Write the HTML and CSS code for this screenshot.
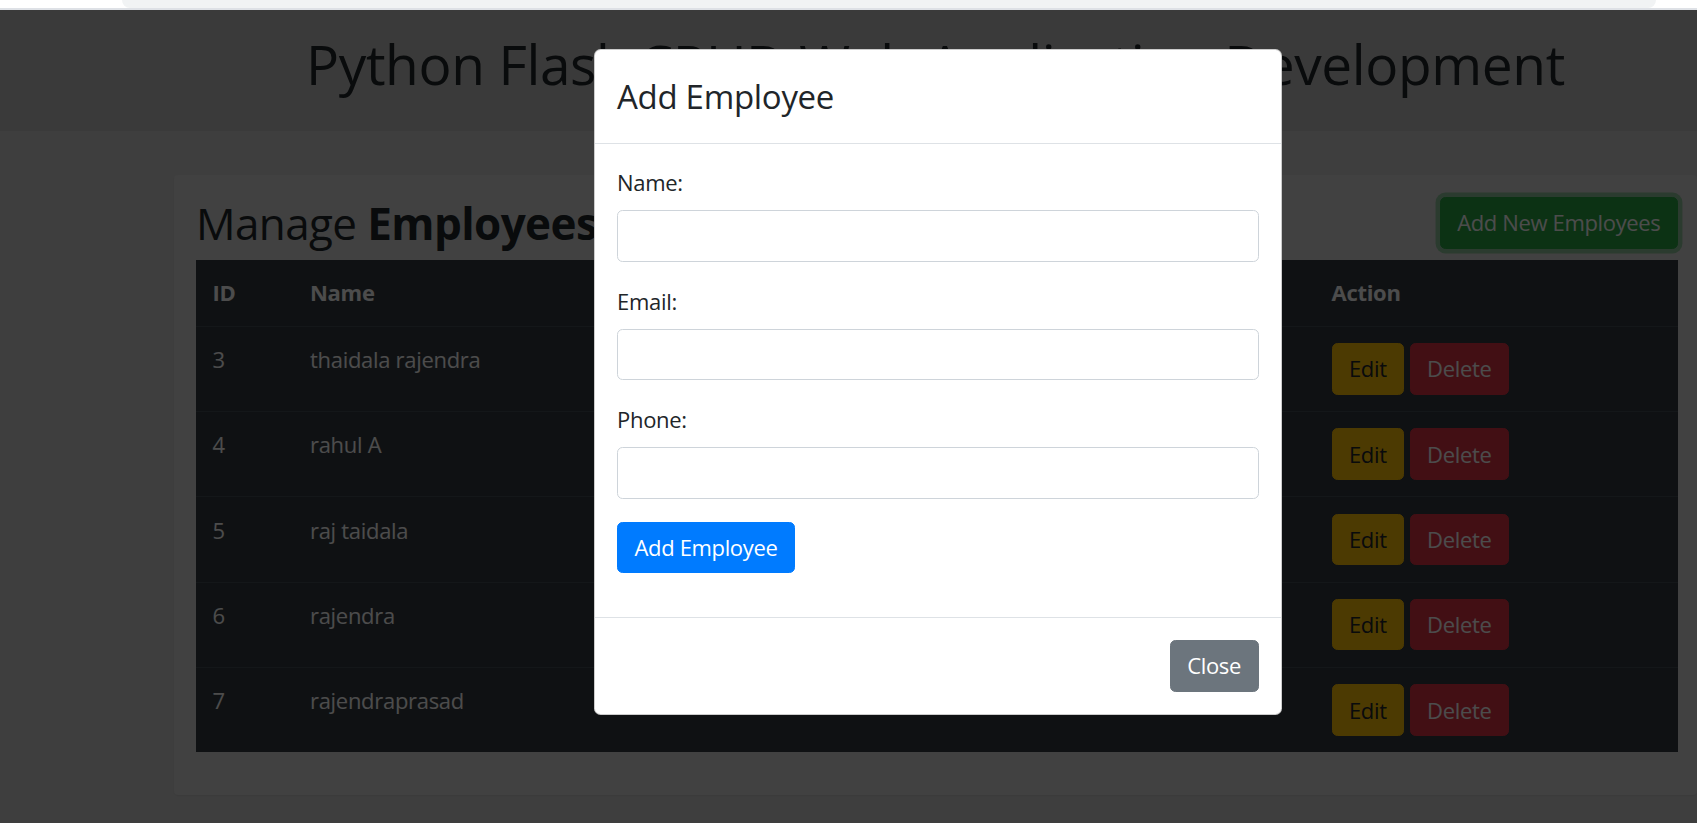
FILE: index.html
```html
<!DOCTYPE html>
<html lang="en">
<head>
<meta charset="utf-8">
<title>Python Flask CRUD Web Application Development</title>
<link rel="stylesheet" href="styles.css">
</head>
<body>
<div class="chrome"><div class="chrome-bar"></div></div>
<div class="viewport">
  <header class="hero">
    <h1 class="hero-title">Python Flask CRUD Web Application Development</h1>
  </header>
  <main class="wrap">
    <section class="card">
      <div class="card-head">
        <h2 class="card-title">Manage <b>Employees</b></h2>
        <button class="btn btn-success btn-focus" type="button">Add New Employees</button>
      </div>
      <table class="table">
        <colgroup>
          <col class="c-id"><col class="c-name"><col class="c-email"><col class="c-phone"><col class="c-action">
        </colgroup>
        <thead>
          <tr><th>ID</th><th>Name</th><th>Email</th><th>Phone</th><th>Action</th></tr>
        </thead>
        <tbody>
          <tr><td>3</td><td>thaidala rajendra</td><td>rajendra@gmail.com</td><td>9876543210</td><td><button class="btn btn-warning" type="button">Edit</button> <button class="btn btn-danger" type="button">Delete</button></td></tr>
          <tr><td>4</td><td>rahul A</td><td>rahul@gmail.com</td><td>9876501234</td><td><button class="btn btn-warning" type="button">Edit</button> <button class="btn btn-danger" type="button">Delete</button></td></tr>
          <tr><td>5</td><td>raj taidala</td><td>raj@gmail.com</td><td>9123456780</td><td><button class="btn btn-warning" type="button">Edit</button> <button class="btn btn-danger" type="button">Delete</button></td></tr>
          <tr><td>6</td><td>rajendra</td><td>rajendra6@gmail.com</td><td>9988776655</td><td><button class="btn btn-warning" type="button">Edit</button> <button class="btn btn-danger" type="button">Delete</button></td></tr>
          <tr><td>7</td><td>rajendraprasad</td><td>prasad@gmail.com</td><td>9012345678</td><td><button class="btn btn-warning" type="button">Edit</button> <button class="btn btn-danger" type="button">Delete</button></td></tr>
        </tbody>
      </table>
    </section>
  </main>

  <div class="backdrop"></div>

  <div class="modal" role="dialog" aria-modal="true">
    <div class="modal-content">
      <div class="modal-header">
        <h4 class="modal-title">Add Employee</h4>
      </div>
      <div class="modal-body">
        <form>
          <div class="form-group">
            <label class="label">Name:</label>
            <input class="input" type="text">
          </div>
          <div class="form-group">
            <label class="label">Email:</label>
            <input class="input" type="email">
          </div>
          <div class="form-group">
            <label class="label">Phone:</label>
            <input class="input" type="text">
          </div>
          <div class="form-group">
            <button class="btn btn-primary" type="button">Add Employee</button>
          </div>
        </form>
      </div>
      <div class="modal-footer">
        <button class="btn btn-secondary" type="button">Close</button>
      </div>
    </div>
  </div>
</div>
</body>
</html>
```

FILE: styles.css
```css
html, body {
  margin: 0;
  padding: 0;
  overflow: hidden;
}

body {
  width: 1697px;
  height: 823px;
  font-family: "Open Sans", "Noto Sans", "DejaVu Sans", sans-serif;
  font-size: 22px;
  line-height: 1.5;
  letter-spacing: -0.3px;
  color: #212529;
  background: #cfcfcf;
}

/* browser chrome strip */
.chrome {
  height: 8px;
  background: #ffffff;
  border-bottom: 2px solid #dee1e6;
}
.chrome-bar {
  margin-left: 122px;
  width: 1534px;
  height: 8px;
  background: #f1f3f4;
  border-radius: 0 0 8px 8px;
}

.viewport {
  position: relative;
  height: 813px;
  overflow: hidden;
  background: #cfcfcf;
}

/* page header */
.hero {
  background: #c2c2c2;
  padding: 21px 0 23px;
}
.hero-title {
  margin: 0 0 11px 306px;
  font-size: 55px;
  font-weight: 400;
  line-height: 1.2;
  letter-spacing: -0.38px;
  color: #212529;
  white-space: nowrap;
}

.wrap {
  padding-top: 44px;
}

.card {
  margin-left: 174px;
  padding: 22px 19px 43px 22px;
  background: #d9d9d9;
  border-radius: 4px;
  box-shadow: 0 1px 1px rgba(0, 0, 0, 0.05);
}

.card-head {
  display: flex;
  justify-content: space-between;
  align-items: flex-start;
  margin-bottom: 10px;
}
.card-title {
  margin: 0;
  font-size: 44px;
  font-weight: 400;
  line-height: 1.2;
  letter-spacing: -0.6px;
}
.card-title b {
  font-weight: 700;
}

/* buttons */
.btn {
  display: inline-block;
  font-family: inherit;
  font-size: 22px;
  line-height: 1.5;
  font-weight: 400;
  letter-spacing: -0.35px;
  padding: 8.25px 16.5px;
  border: 1px solid transparent;
  border-radius: 5.5px;
  cursor: pointer;
  vertical-align: middle;
}
.btn-success { background: #28a745; border-color: #28a745; color: #fff; }
.btn-focus { box-shadow: 0 0 0 4.4px rgba(72, 180, 97, 0.5); }
.btn-warning { background: #ffc107; border-color: #ffc107; color: #212529; }
.btn-danger { background: #dc3545; border-color: #dc3545; color: #fff; }
.btn-primary { background: #007bff; border-color: #007bff; color: #fff; }
.btn-secondary { background: #6c757d; border-color: #6c757d; color: #fff; }

/* table */
.table {
  width: 100%;
  table-layout: fixed;
  border-collapse: collapse;
  background: #343a40;
  color: #fff;
}
.c-id { width: 97.5px; }
.c-name { width: 310px; }
.c-email { width: 450px; }
.c-phone { width: 261.5px; }
.c-action { width: 363px; }

.table th,
.table td {
  text-align: left;
  vertical-align: top;
  border-top: 1px solid #454d55;
  white-space: nowrap;
  overflow: hidden;
}
.table thead th {
  padding: 16.5px;
  vertical-align: bottom;
  border-top: 0;
  border-bottom: 1px solid #454d55;
  font-weight: 700;
}
.table td {
  padding: 16.3px 16.5px 16.5px;
}

/* modal */
.backdrop {
  position: absolute;
  inset: 0;
  background: rgba(0, 0, 0, 0.7);
}

.modal {
  position: absolute;
  left: 594px;
  top: 38.5px;
  width: 687.5px;
}
.modal-content {
  background: #fff;
  border: 1px solid rgba(0, 0, 0, 0.2);
  border-radius: 6.6px;
  overflow: hidden;
}
.modal-header {
  padding: 22px;
  border-bottom: 1px solid #dee2e6;
}
.modal-title {
  margin: 0;
  font-size: 33px;
  font-weight: 400;
  line-height: 1.5;
  letter-spacing: -0.3px;
}
.modal-body {
  padding: 22px 22px 21px;
}
.form-group {
  margin-bottom: 23px;
}
.label {
  display: inline-block;
  margin-bottom: 11px;
}
.input {
  display: block;
  box-sizing: border-box;
  width: 100%;
  height: 51.5px;
  padding: 8.25px 16.5px;
  font-family: inherit;
  font-size: 22px;
  border: 1px solid #ced4da;
  border-radius: 5.5px;
  background: #fff;
}
.modal-footer {
  display: flex;
  justify-content: flex-end;
  padding: 16.5px;
  border-top: 1px solid #dee2e6;
}
.modal-footer .btn {
  margin: 5.5px;
}
```
